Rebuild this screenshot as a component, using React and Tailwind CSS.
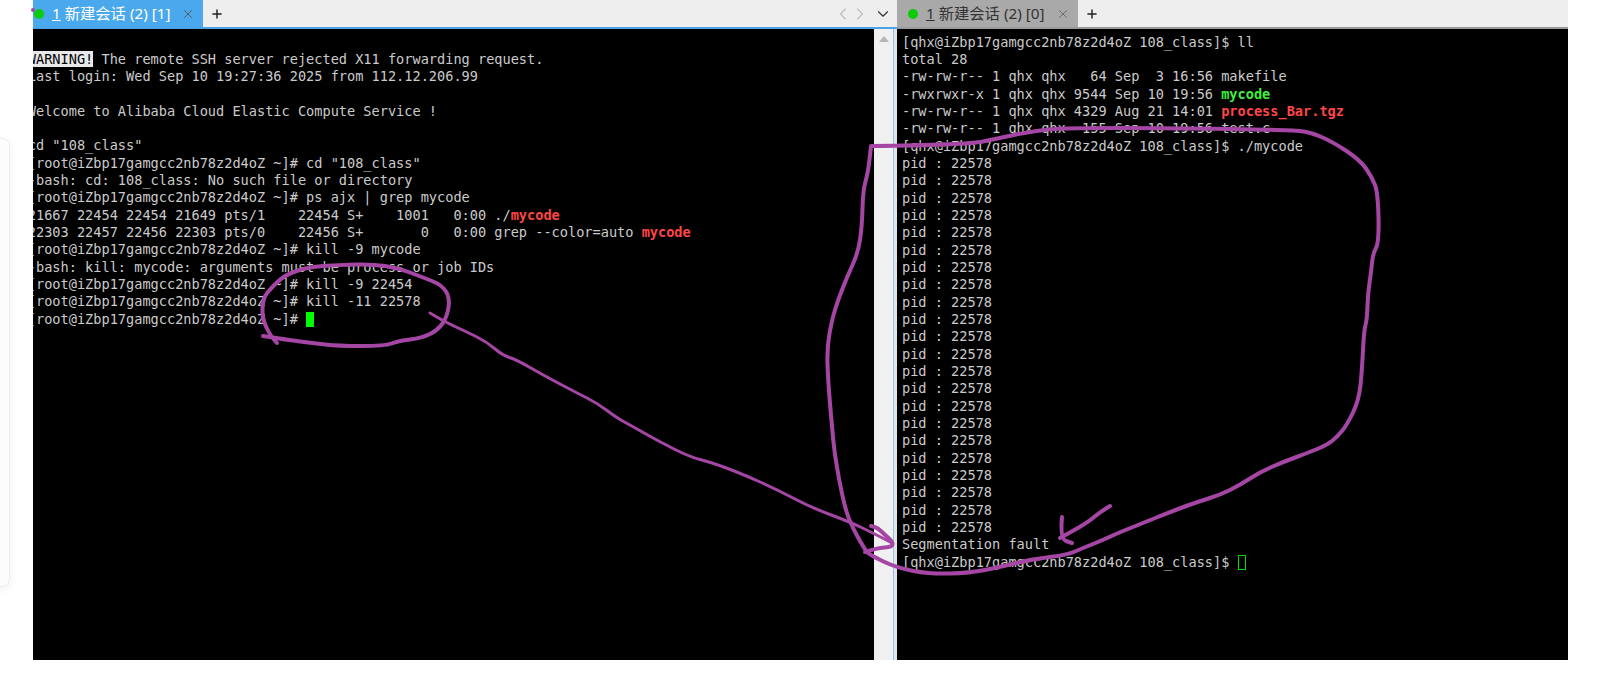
import { X, Plus, ChevronLeft, ChevronRight, ChevronDown } from "lucide-react";

const PROMPT = "[root@iZbp17gamgcc2nb78z2d4oZ ~]# ";
const QHX = "[qhx@iZbp17gamgcc2nb78z2d4oZ 108_class]$ ";
const PIDS = Array.from({ length: 22 }, () => "pid : 22578");

// hand-drawn marker strokes on top of the screenshot, as x,y point lists
const LOOP = "871,146 966,145 1000,138 1023,133 1050,129 1077,128 1167,128 1290,130 1310,132 1333,142 1360,160 1372,177 1378,193 1379,243 1373,253 1371,273 1368,293 1367,320 1364,330 1362,370 1359,400 1347,425 1337,437 1327,445 1310,452 1283,462 1260,472 1240,485 1220,495 1197,502 1170,512 1143,523 1118,533 1103,540 1083,548 1067,555 1033,559 1000,567 970,573 930,574 897,568 870,555 865,550 850,523 843,500 835,457 832,427 828,380 827,347 832,320 837,303 847,277 858,253 862,227 863,190 868,173 871,146";
const CIRCLE = "263,336 288,340 312,343 338,346 385,346 398,341 422,338 438,330 447,317 450,298 442,285 422,277 398,268 372,264 338,265 308,267 285,275 272,287 263,298 262,318 270,335 277,343";
const ARROW = "430,313 445,322 467,332 487,342 502,355 517,360 543,375 577,393 597,403 617,418 630,425 660,442 690,457 710,462 740,473 778,490 810,507 850,522 873,533 892,543";
const FAULT_TAIL = "1110,506 1100,512 1087,523 1060,538";
const FAULT_HEAD = "1062,517 1060,539 1072,543";
const ARROW_HEAD = "865,552 877,548 892,547 893,542 885,535 878,528 871,526";

// rounds a point list through the midpoints so the line reads like a pen stroke
const smooth = (points) => {
  const pts = points.split(" ").map((p) => p.split(",").map(Number));
  let d = `M${pts[0][0]} ${pts[0][1]}`;
  for (let i = 1; i < pts.length - 1; i++) {
    const mx = (pts[i][0] + pts[i + 1][0]) / 2;
    const my = (pts[i][1] + pts[i + 1][1]) / 2;
    d += `Q${pts[i][0]} ${pts[i][1]} ${mx} ${my}`;
  }
  const last = pts[pts.length - 1];
  return `${d}L${last[0]} ${last[1]}`;
};

const Red = ({ children }) => <span className="font-bold text-[#ff4545]">{children}</span>;
const Green = ({ children }) => <span className="font-bold text-[#3fee3f]">{children}</span>;

const App = () => {
  return (
    <div className="relative flex w-[1606px] h-[692px] bg-white pl-[33px] pr-[38px] pb-[32px] overflow-hidden font-['Noto_Sans','Noto_Sans_CJK_SC',sans-serif]">
      {/* floating card at the left edge */}
      <div className="absolute left-[-20px] top-[138px] w-[30px] h-[449px] rounded-[8px] bg-[#fcfcfc] border border-[#eeeeee] shadow-[0_2px_10px_rgba(0,0,0,0.06)]"></div>

      {/* left pane */}
      <div className="flex flex-col w-[864px] shrink-0">
        <div className="flex items-center h-[29px] bg-[#eeeeee] border-b-2 border-[#4aa3e6] shrink-0">
          <div className="flex items-center h-full w-[170px] pl-[1px] bg-[#4aa8ec] shrink-0">
            <span className="w-[10px] h-[10px] rounded-full bg-[#0bcb0b] mr-[8px] shrink-0"></span>
            <span className="text-[15.3px] whitespace-pre text-white">
              <span className="underline">1</span> 新建会话 (2) [1]
            </span>
            <X size={14} strokeWidth={1.5} className="ml-auto mr-[8px] text-[#555555]" />
          </div>
          <Plus size={14} strokeWidth={2.5} className="ml-[7px] text-[#222222]" />
          <div className="flex items-center ml-auto mr-[5px]">
            <ChevronLeft size={20} strokeWidth={1.25} className="text-[#aaaaaa]" />
            <ChevronRight size={20} strokeWidth={1.25} className="ml-[-3px] text-[#aaaaaa]" />
            <ChevronDown size={18} strokeWidth={1.5} className="ml-[4px] text-[#333333]" />
          </div>
        </div>
        <div className="flex flex-1 min-h-0">
          <div className="flex-1 bg-black overflow-hidden pt-[4.3px] font-['DejaVu_Sans_Mono',monospace] text-[13.6px] leading-[17.33px] text-[#cbcbcb] whitespace-pre">
            <div className="ml-[-5.2px]">
              <div> </div>
              <div><span className="bg-[#e8e8e8] text-black">WARNING!</span> The remote SSH server rejected X11 forwarding request.</div>
              <div>Last login: Wed Sep 10 19:27:36 2025 from 112.12.206.99</div>
              <div> </div>
              <div>Welcome to Alibaba Cloud Elastic Compute Service !</div>
              <div> </div>
              <div>cd "108_class"</div>
              <div>{PROMPT}cd "108_class"</div>
              <div>-bash: cd: 108_class: No such file or directory</div>
              <div>{PROMPT}ps ajx | grep mycode</div>
              <div>21667 22454 22454 21649 pts/1    22454 S+    1001   0:00 ./<Red>mycode</Red></div>
              <div>22303 22457 22456 22303 pts/0    22456 S+       0   0:00 grep --color=auto <Red>mycode</Red></div>
              <div>{PROMPT}kill -9 mycode</div>
              <div>-bash: kill: mycode: arguments must be process or job IDs</div>
              <div>{PROMPT}kill -9 22454</div>
              <div>{PROMPT}kill -11 22578</div>
              <div>{PROMPT}<span className="inline-block w-[8px] h-[15px] bg-[#00ff00] align-[-3px]"></span></div>
            </div>
          </div>
          {/* scrollbar */}
          <div className="flex justify-center w-[19px] bg-[#f0f0f0] pt-[7px] shrink-0">
            <div className="w-0 h-0 border-x-[5px] border-x-transparent border-b-[6px] border-b-[#b5b5b5]"></div>
          </div>
          <div className="w-[1px] bg-[#8cc4ee] shrink-0"></div>
          <div className="w-[3px] bg-[#e4e4e4] shrink-0"></div>
        </div>
      </div>

      {/* right pane */}
      <div className="flex flex-col flex-1 min-w-0">
        <div className="flex items-center h-[29px] bg-[#eeeeee] border-b-2 border-[#9a9a9a] shrink-0">
          <div className="flex items-center h-full w-[181px] pl-[11px] bg-[#a9a9a9] shrink-0">
            <span className="w-[10px] h-[10px] rounded-full bg-[#0bcb0b] mr-[8px] shrink-0"></span>
            <span className="text-[15.3px] whitespace-pre text-[#333333]">
              <span className="underline">1</span> 新建会话 (2) [0]
            </span>
            <X size={14} strokeWidth={1.5} className="ml-auto mr-[8px] text-[#666666]" />
          </div>
          <Plus size={14} strokeWidth={2.5} className="ml-[7px] text-[#222222]" />
        </div>
        <div className="flex-1 bg-black overflow-hidden pt-[4.7px] pl-[5px] font-['DejaVu_Sans_Mono',monospace] text-[13.6px] leading-[17.33px] text-[#cbcbcb] whitespace-pre">
          <div>{QHX}ll</div>
          <div>total 28</div>
          <div>-rw-rw-r-- 1 qhx qhx   64 Sep  3 16:56 makefile</div>
          <div>-rwxrwxr-x 1 qhx qhx 9544 Sep 10 19:56 <Green>mycode</Green></div>
          <div>-rw-rw-r-- 1 qhx qhx 4329 Aug 21 14:01 <Red>process_Bar.tgz</Red></div>
          <div>-rw-rw-r-- 1 qhx qhx  155 Sep 10 19:56 test.c</div>
          <div>{QHX}./mycode</div>
          {PIDS.map((p, i) => (
            <div key={i}>{p}</div>
          ))}
          <div>Segmentation fault</div>
          <div>{QHX}<span className="inline-block w-[8px] h-[15px] border border-[#00e000] align-[-3px]"></span></div>
        </div>
      </div>

      {/* marker annotations */}
      <svg className="absolute inset-0 pointer-events-none" width="1606" height="692" fill="none" stroke="#a546a5" strokeLinecap="round" strokeLinejoin="round">
        <path d={smooth(LOOP)} strokeWidth="4" />
        <path d={smooth(CIRCLE)} strokeWidth="4" />
        <path d={smooth(ARROW)} strokeWidth="3" />
        <path d={smooth(FAULT_TAIL)} strokeWidth="4" />
        <path d={smooth(FAULT_HEAD)} strokeWidth="4" />
        <path d={smooth(ARROW_HEAD)} strokeWidth="4" />
        <circle cx="33" cy="10" r="2" fill="#a546a5" stroke="none" />
      </svg>
    </div>
  );
};

export default App;
